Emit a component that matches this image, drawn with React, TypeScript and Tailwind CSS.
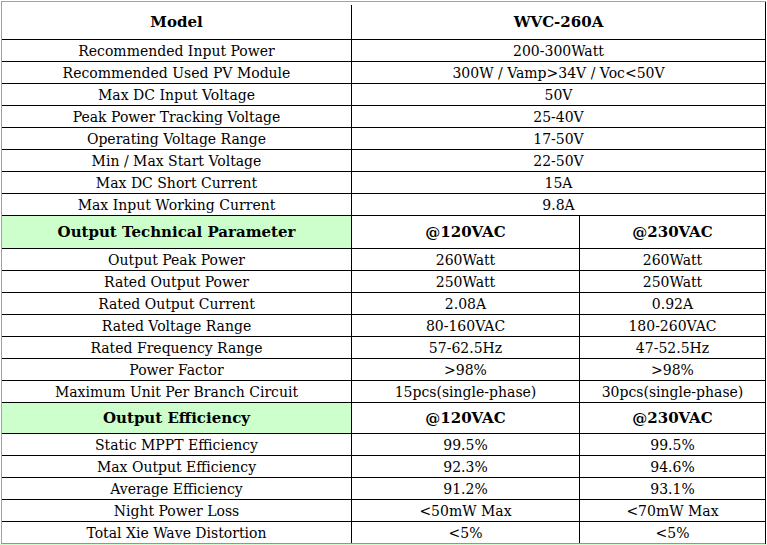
import React from "react";

type Row = { label: string; a: string; b?: string; head?: boolean; green?: boolean; h: string; last?: boolean };

const rows: Row[] = [
  { label: "Model", a: "WVC-260A", head: true, h: "h-[38px] pt-[3px]" },
  { label: "Recommended Input Power", a: "200-300Watt", h: "h-[22px]" },
  { label: "Recommended Used PV Module", a: "300W / Vamp>34V / Voc<50V", h: "h-[22px]" },
  { label: "Max DC Input Voltage", a: "50V", h: "h-[22px]" },
  { label: "Peak Power Tracking Voltage", a: "25-40V", h: "h-[22px]" },
  { label: "Operating Voltage Range", a: "17-50V", h: "h-[22px]" },
  { label: "Min / Max Start Voltage", a: "22-50V", h: "h-[22px]" },
  { label: "Max DC Short Current", a: "15A", h: "h-[22px]" },
  { label: "Max Input Working Current", a: "9.8A", h: "h-[22px]" },
  { label: "Output Technical Parameter", a: "@120VAC", b: "@230VAC", head: true, green: true, h: "h-[33px]" },
  { label: "Output Peak Power", a: "260Watt", b: "260Watt", h: "h-[22px]" },
  { label: "Rated Output Power", a: "250Watt", b: "250Watt", h: "h-[22px]" },
  { label: "Rated Output Current", a: "2.08A", b: "0.92A", h: "h-[22px]" },
  { label: "Rated Voltage Range", a: "80-160VAC", b: "180-260VAC", h: "h-[22px]" },
  { label: "Rated Frequency Range", a: "57-62.5Hz", b: "47-52.5Hz", h: "h-[22px]" },
  { label: "Power Factor", a: ">98%", b: ">98%", h: "h-[22px]" },
  { label: "Maximum Unit Per Branch Circuit", a: "15pcs(single-phase)", b: "30pcs(single-phase)", h: "h-[22px]" },
  { label: "Output Efficiency", a: "@120VAC", b: "@230VAC", head: true, green: true, h: "h-[31px]" },
  { label: "Static MPPT Efficiency", a: "99.5%", b: "99.5%", h: "h-[22px]" },
  { label: "Max Output Efficiency", a: "92.3%", b: "94.6%", h: "h-[22px]" },
  { label: "Average Efficiency", a: "91.2%", b: "93.1%", h: "h-[22px]" },
  { label: "Night Power Loss", a: "<50mW Max", b: "<70mW Max", h: "h-[22px]" },
  { label: "Total Xie Wave Distortion", a: "<5%", b: "<5%", h: "h-[22px]", last: true },
];

export default function App() {
  return (
    <div
      className="w-[767px] h-[545px] bg-white pt-px overflow-hidden text-black"
      style={{ fontFamily: '"DejaVu Serif", "Liberation Serif", serif' }}
    >
      <div className="ml-px w-[765px] border-t border-l border-[#a8a48c]">
        <div className="border-r border-black">
          {rows.map((r, i) => (
            <div
              key={i}
              className={`flex border-b ${r.last ? "border-[#6fae6f]" : "border-black"} ${r.h} ${
                r.head ? "font-bold text-[15px]" : "text-[14px]"
              } leading-none`}
            >
              <div
                className={`w-[350px] shrink-0 flex items-center justify-center border-r border-black ${
                  r.green ? "bg-[#ccffcc]" : ""
                }`}
              >
                {r.label}
              </div>
              {r.b === undefined ? (
                <div className="flex-1 flex items-center justify-center">{r.a}</div>
              ) : (
                <>
                  <div className="w-[228px] shrink-0 flex items-center justify-center border-r border-black">
                    {r.a}
                  </div>
                  <div className="flex-1 flex items-center justify-center">{r.b}</div>
                </>
              )}
            </div>
          ))}
        </div>
      </div>
      <div className="h-px bg-[#ccffcc]" />
    </div>
  );
}
